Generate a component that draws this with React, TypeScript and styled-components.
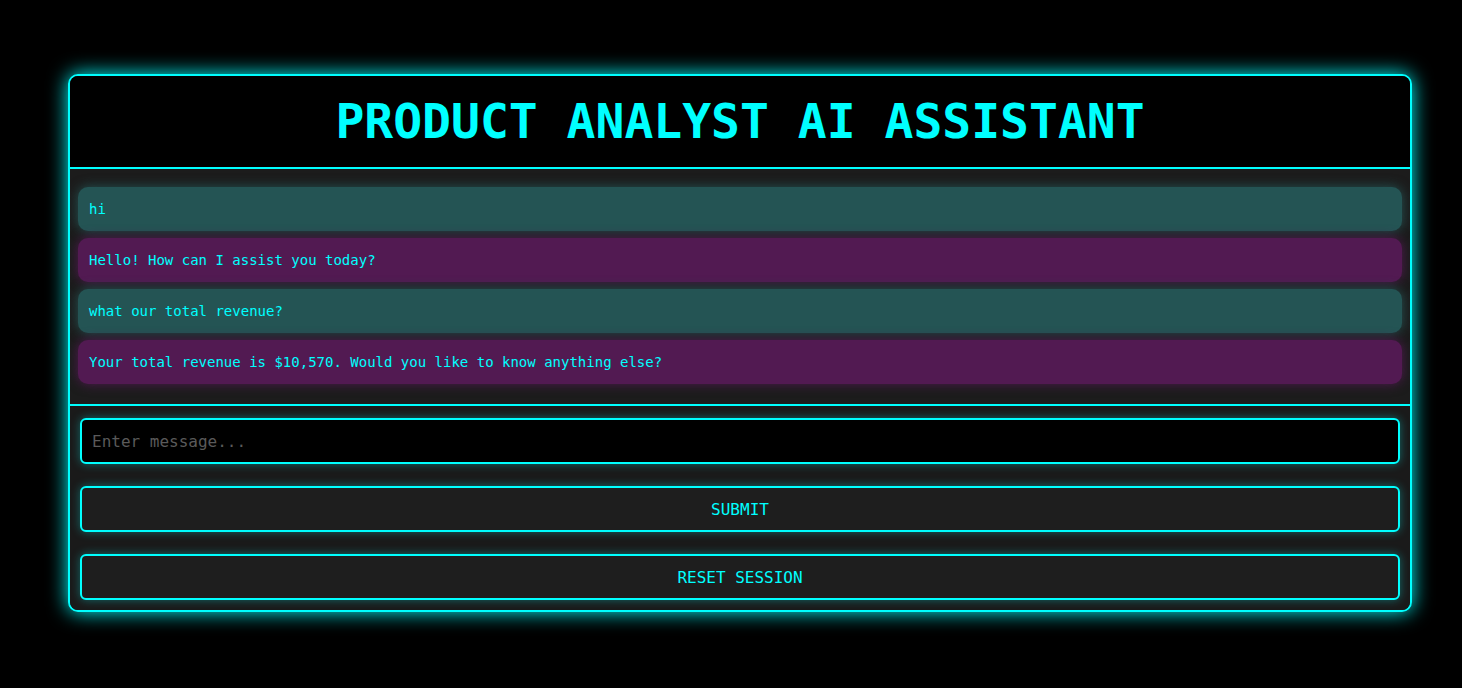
import React from "react";
import styled, { createGlobalStyle } from "styled-components";

const Global = createGlobalStyle`
  html, body { margin: 0; padding: 0; background: #000; }
  body {
    font-family: "DejaVu Sans Mono", "Liberation Mono", monospace;
    min-height: 688px;
  }
`;

const Page = styled.div`
  padding: 74px 50px 0 68px;
`;

const Panel = styled.div`
  border: 2px solid #00ffff;
  border-radius: 10px;
  box-shadow: 0 0 20px #00ffff;
  background: #1a1a1a;
  overflow: hidden;
`;

const Header = styled.header`
  background: #000;
  border-bottom: 2px solid #00ffff;
  padding: 17px 0 18px;
  text-align: center;
`;

const Title = styled.h1`
  margin: 0;
  font-size: 48px;
  font-weight: bold;
  color: #00ffff;
  line-height: 56px;
`;

const Chat = styled.div`
  display: flex;
  flex-direction: column;
  gap: 7px;
  padding: 18px 8px 20px;
  background: #1c1c1c;
  border-bottom: 2px solid #00ffff;
`;

const Message = styled.div<{ $bot?: boolean }>`
  background: ${(p) => (p.$bot ? "#521a52" : "#245454")};
  box-shadow: 0 0 12px ${(p) => (p.$bot ? "#521a52" : "#245454")};
  border-radius: 10px;
  padding: 14px 11px;
  color: #00ffff;
  font-size: 14px;
  line-height: 16px;
`;

const Controls = styled.div`
  display: flex;
  flex-direction: column;
  gap: 22px;
  padding: 12px 10px 10px;
  background: #1a1a1a;
`;

const Input = styled.input`
  box-sizing: border-box;
  height: 46px;
  width: 100%;
  background: #000;
  border: 2px solid #00ffff;
  border-radius: 6px;
  box-shadow: 0 0 10px rgba(0, 255, 255, 0.35);
  padding: 0 10px;
  font-family: "DejaVu Sans Mono", "Liberation Mono", monospace;
  font-size: 16px;
  color: #00ffff;
  caret-color: #4aa;
  outline: none;
  &::placeholder { color: #5a5a5a; }
`;

const Button = styled.button`
  box-sizing: border-box;
  height: 46px;
  width: 100%;
  background: #1e1e1e;
  border: 2px solid #00ffff;
  border-radius: 6px;
  box-shadow: 0 0 10px rgba(0, 255, 255, 0.35);
  font-family: "DejaVu Sans Mono", "Liberation Mono", monospace;
  font-size: 16px;
  color: #00ffff;
  text-transform: uppercase;
  cursor: pointer;
`;

const messages = [
  { bot: false, text: "hi" },
  { bot: true, text: "Hello! How can I assist you today?" },
  { bot: false, text: "what our total revenue?" },
  { bot: true, text: "Your total revenue is $10,570. Would you like to know anything else?" },
];

export default function App() {
  return (
    <Page>
      <Global />
      <Panel>
        <Header>
          <Title>PRODUCT ANALYST AI ASSISTANT</Title>
        </Header>
        <Chat>
          {messages.map((m, i) => (
            <Message key={i} $bot={m.bot}>
              {m.text}
            </Message>
          ))}
        </Chat>
        <Controls>
          <Input autoFocus placeholder="Enter message..." />
          <Button>Submit</Button>
          <Button>Reset Session</Button>
        </Controls>
      </Panel>
    </Page>
  );
}
